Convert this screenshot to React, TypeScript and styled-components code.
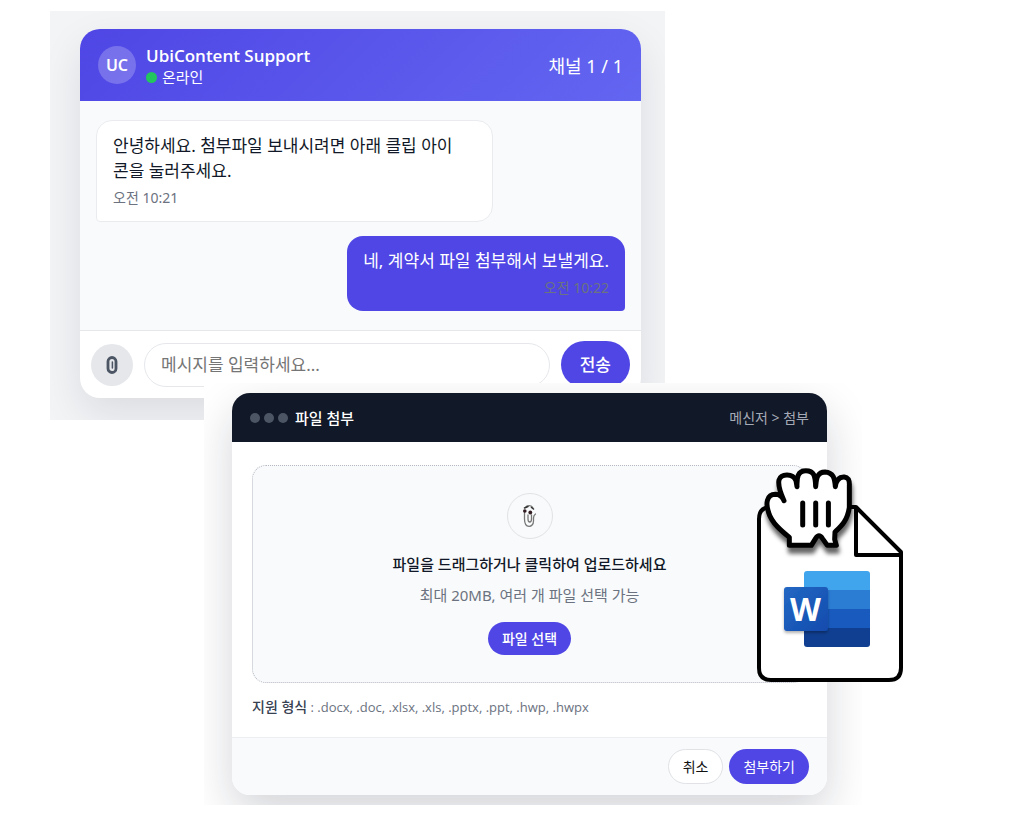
import React from "react";
import styled, { createGlobalStyle, css } from "styled-components";

const GlobalStyle = createGlobalStyle`
  *, *::before, *::after { box-sizing: border-box; }
  body {
    margin: 0;
    background: #ffffff;
    color: #111827;
    font-family: "Noto Sans", "Noto Sans CJK KR", sans-serif;
    font-size: 14px;
    line-height: 20px;
  }
  h2, p { margin: 0; }
  button, input { font: inherit; }
`;

const Page = styled.main`
  padding: 11px 0;
  min-width: 760px;
`;

const Stage = styled.section<{ $front?: boolean }>`
  position: relative;
  ${({ $front }) =>
    $front
      ? css`
          margin: -37px 147px 0 204px;
        `
      : css`
          margin: 0 344px 0 50px;
        `}
`;

const Backdrop = styled.div<{ $front?: boolean }>`
  overflow: hidden;
  padding: ${({ $front }) => ($front ? "10px 35px 10px 28px" : "18px 24px 22px 30px")};
  background: ${({ $front }) => ($front ? "#ffffff" : "#f3f4f6")};
`;

const Card = styled.div<{ $front?: boolean }>`
  overflow: hidden;
  border-radius: ${({ $front }) => ($front ? "18px" : "20px")};
  background: #ffffff;
  box-shadow: ${({ $front }) =>
    $front ? "0 18px 45px rgba(15, 23, 42, 0.18)" : "0 16px 40px rgba(15, 23, 42, 0.1)"};
`;

const ChatHeader = styled.header`
  display: flex;
  align-items: center;
  gap: 10px;
  height: 72px;
  padding: 0 18px;
  color: #ffffff;
  background: linear-gradient(135deg, #4f46e5, #6366f1);
`;

const Avatar = styled.div`
  display: grid;
  place-items: center;
  width: 38px;
  height: 38px;
  border-radius: 50%;
  background: rgba(255, 255, 255, 0.22);
  font-size: 16px;
  font-weight: 600;
`;

const Identity = styled.div`
  flex: 1;
  padding-top: 2px;
`;

const Name = styled.h2`
  font-family: "Open Sans", "Noto Sans CJK KR", sans-serif;
  font-size: 17px;
  line-height: 22px;
  font-weight: 600;
`;

const Status = styled.p`
  display: flex;
  align-items: center;
  gap: 5px;
  font-size: 15px;
`;

const OnlineDot = styled.span`
  width: 11px;
  height: 11px;
  border-radius: 50%;
  background: #22c55e;
`;

const Channel = styled.span`
  padding-top: 2px;
  font-size: 18px;
`;

const Messages = styled.div`
  display: flex;
  flex-direction: column;
  gap: 14px;
  padding: 19px 16px;
  background: #f9fafb;
`;

const Bubble = styled.div<{ $mine?: boolean }>`
  padding: 12px 16px;
  font-size: 17px;
  line-height: 25px;
  ${({ $mine }) =>
    $mine
      ? css`
          align-self: flex-end;
          border-radius: 16px 16px 4px 16px;
          color: #ffffff;
          background: #4f46e5;
          text-align: right;
        `
      : css`
          align-self: flex-start;
          width: 75%;
          border: 1px solid #e9ebef;
          border-radius: 16px 16px 16px 4px;
          background: #ffffff;
        `}
`;

const Time = styled.time`
  display: block;
  padding-top: 4px;
  color: #6b7280;
  font-size: 14px;
  line-height: 22px;
`;

const Composer = styled.form`
  display: flex;
  align-items: center;
  gap: 11px;
  padding: 10px 11px;
  border-top: 1px solid #e5e7eb;
`;

const ClipButton = styled.button`
  display: grid;
  place-items: center;
  width: 42px;
  height: 42px;
  padding: 0;
  border: 0;
  border-radius: 50%;
  background: #e5e7eb;
`;

const MessageInput = styled.input`
  flex: 1;
  min-width: 0;
  height: 44px;
  padding: 0 16px;
  border: 1px solid #e5e7eb;
  border-radius: 22px;
  background: #ffffff;
  font-size: 17px;
  &::placeholder { color: #757575; }
`;

const PillButton = styled.button<{ $size: "small" | "medium" | "large"; $plain?: boolean }>`
  height: ${({ $size }) => ({ small: 33, medium: 35, large: 47 })[$size]}px;
  padding: 0 ${({ $size }) => ($size === "large" ? 19 : 14)}px;
  border: ${({ $plain }) => ($plain ? "1px solid #e0e2e6" : "0")};
  border-radius: 24px;
  color: ${({ $plain }) => ($plain ? "#111111" : "#ffffff")};
  background: ${({ $plain }) => ($plain ? "#ffffff" : "#4f46e5")};
  font-size: ${({ $size }) => ($size === "large" ? 17 : 14)}px;
  font-weight: ${({ $size }) => ($size === "medium" ? 400 : 500)};
`;

const DialogHeader = styled.header`
  display: flex;
  align-items: center;
  height: 49px;
  padding: 0 18px;
  color: #ffffff;
  background: #111827;
`;

const WindowDots = styled.div`
  display: flex;
  gap: 4px;
  margin-right: 7px;
`;

const WindowDot = styled.span`
  width: 10px;
  height: 10px;
  border-radius: 50%;
  background: #4b5563;
`;

const DialogTitle = styled.h2`
  flex: 1;
  font-size: 15px;
  line-height: 20px;
  font-weight: 500;
`;

const Breadcrumb = styled.span`
  color: #a5abb6;
`;

const DialogBody = styled.div`
  padding: 23px 20px 20px;
`;

const DropZone = styled.div`
  display: flex;
  flex-direction: column;
  align-items: center;
  margin-bottom: 14px;
  padding: 27px 20px;
  border: 1px dotted #b4b9c2;
  border-radius: 14px;
  background: #f9fafb;
`;

const DropIcon = styled.div`
  display: grid;
  place-items: center;
  width: 46px;
  height: 46px;
  margin-bottom: 14px;
  border: 1px solid #e0e2e5;
  border-radius: 50%;
`;

const DropTitle = styled.p`
  margin-bottom: 10px;
  font-size: 15px;
  line-height: 22px;
  font-weight: 500;
`;

const DropHint = styled.p`
  margin-bottom: 17px;
  color: #6b7280;
  font-size: 15px;
`;

const Formats = styled.p`
  color: #6b7280;
  font-family: "Open Sans", "Noto Sans CJK KR", sans-serif;
  font-size: 13px;
  b { color: #374151; font-size: 14px; font-weight: 500; }
`;

const DialogFooter = styled.footer`
  display: flex;
  justify-content: flex-end;
  gap: 6px;
  padding: 11px 18px;
  border-top: 1px solid #eceef1;
  background: #f9fafb;
`;

const DraggedFile = styled.svg`
  position: absolute;
  top: 77px;
  right: -48px;
`;

const ClipIcon = () => (
  <svg width="12" height="18" viewBox="0 0 12 18" fill="none" stroke="#4b5563" strokeLinecap="round">
    <path d="M2 5.500A4 4 0 0 1 10 5.500v7a4 4 0 0 1-8 0Z" strokeWidth="2.800" />
    <path d="M6.400 6v6" strokeWidth="1.500" />
  </svg>
);

const ClippyIcon = () => (
  <svg width="16" height="26" viewBox="0 0 16 26" fill="none" stroke="#777777" strokeWidth="1.3" strokeLinecap="round">
    <path d="M3.500 4.500C4.500 2.500 9.500 1.500 11 5M2.500 9v7c0 10 9 9 9 2V15c0-2 .5-3 2-4M6 12v4c0 4 3.500 4 3.500 0v-4" />
    <path d="M2.500 5l3.500-1.500M9.500 4.500l2 1.500" stroke="#333333" strokeWidth="1.500" />
    <circle cx="2.800" cy="8" r="1.800" fill="#321e22" stroke="none" />
    <circle cx="8.300" cy="9.500" r="1.900" fill="#321e22" stroke="none" />
  </svg>
);

const WordFile = () => (
  <DraggedFile width="160" height="230" viewBox="750 460 160 230" role="img" aria-label="Word">
    <defs>
      <filter id="handShadow" x="-20%" y="-20%" width="150%" height="150%">
        <feDropShadow dx="1" dy="6" stdDeviation="2" floodOpacity="0.6" />
      </filter>
      <filter id="tileShadow" x="-20%" y="-20%" width="150%" height="150%">
        <feDropShadow dx="0" dy="2" stdDeviation="1.5" floodOpacity="0.3" />
      </filter>
      <linearGradient id="tile" x1="0" y1="0" x2="1" y2="1">
        <stop stopColor="#2368c4" />
        <stop offset="1" stopColor="#124bad" />
      </linearGradient>
      <clipPath id="bookShape">
        <rect x="804" y="571" width="66" height="76" rx="3" />
      </clipPath>
    </defs>
    <path
      d="M771 507H856L901 552V668Q901 680 889 680H771Q759 680 759 668V519Q759 507 771 507Z"
      fill="#ffffff"
      stroke="#000000"
      strokeWidth="4"
      strokeLinejoin="round"
    />
    <path d="M856 507V555H901" fill="none" stroke="#000000" strokeWidth="4" strokeLinejoin="round" />
    <g clipPath="url(#bookShape)">
      <path fill="#41a5ee" d="M804 571h66v19h-66z" />
      <path fill="#2b7cd3" d="M804 590h66v19h-66z" />
      <path fill="#185abd" d="M804 609h66v19h-66z" />
      <path fill="#103f91" d="M804 628h66v19h-66z" />
    </g>
    <rect x="784" y="587" width="44" height="44" rx="3" fill="url(#tile)" filter="url(#tileShadow)" />
    <text
      x="805.500"
      y="620.500"
      textAnchor="middle"
      fill="#ffffff"
      fontFamily="'Open Sans', sans-serif"
      fontSize="32"
      fontWeight="700"
    >
      W
    </text>
    <g filter="url(#handShadow)">
      <path
        transform="translate(740 450) scale(.33333)"
        d="M148 286V262C126 244 96 220 86 188C76 160 80 134 106 133C120 133 128 142 132 152C122 130 113 108 117 90C124 70 158 70 168 92L171 110C170 82 173 62 198 62C222 62 226 78 227 110C229 82 233 66 255 66C280 68 284 84 286 110C289 88 298 80 313 81C326 83 329 92 328 108V172C322 214 302 230 285 246L284 268L289 286H262L247 265Q237 250 227 265L214 286Z"
        fill="#ffffff"
        stroke="#000000"
        strokeWidth="15"
        strokeLinejoin="round"
      />
    </g>
    <path d="M802.700 503v22M815.700 503v22M828.400 503v22" stroke="#000000" strokeWidth="5" strokeLinecap="round" />
  </DraggedFile>
);

export default function App() {
  return (
    <Page>
      <GlobalStyle />
      <Stage>
        <Backdrop>
          <Card>
            <ChatHeader>
              <Avatar>UC</Avatar>
              <Identity>
                <Name>UbiContent Support</Name>
                <Status>
                  <OnlineDot />
                  온라인
                </Status>
              </Identity>
              <Channel>채널 1 / 1</Channel>
            </ChatHeader>
            <Messages>
              <Bubble>
                안녕하세요. 첨부파일 보내시려면 아래 클립 아이
                <br />
                콘을 눌러주세요.
                <Time>오전 10:21</Time>
              </Bubble>
              <Bubble $mine>
                네, 계약서 파일 첨부해서 보낼게요.
                <Time>오전 10:22</Time>
              </Bubble>
            </Messages>
            <Composer onSubmit={(event) => event.preventDefault()}>
              <ClipButton type="button" aria-label="파일 첨부">
                <ClipIcon />
              </ClipButton>
              <MessageInput aria-label="메시지" placeholder="메시지를 입력하세요..." />
              <PillButton $size="large">전송</PillButton>
            </Composer>
          </Card>
        </Backdrop>
      </Stage>
      <Stage $front>
        <Backdrop $front>
          <Card $front role="dialog" aria-labelledby="attach-title">
            <DialogHeader>
              <WindowDots>
                <WindowDot />
                <WindowDot />
                <WindowDot />
              </WindowDots>
              <DialogTitle id="attach-title">파일 첨부</DialogTitle>
              <Breadcrumb>메신저 &gt; 첨부</Breadcrumb>
            </DialogHeader>
            <DialogBody>
              <DropZone>
                <DropIcon>
                  <ClippyIcon />
                </DropIcon>
                <DropTitle>파일을 드래그하거나 클릭하여 업로드하세요</DropTitle>
                <DropHint>최대 20MB, 여러 개 파일 선택 가능</DropHint>
                <PillButton type="button" $size="small">파일 선택</PillButton>
              </DropZone>
              <Formats>
                <b>지원 형식</b> : .docx, .doc, .xlsx, .xls, .pptx, .ppt, .hwp, .hwpx
              </Formats>
            </DialogBody>
            <DialogFooter>
              <PillButton type="button" $size="medium" $plain>취소</PillButton>
              <PillButton type="button" $size="medium">첨부하기</PillButton>
            </DialogFooter>
          </Card>
        </Backdrop>
        <WordFile />
      </Stage>
    </Page>
  );
}
